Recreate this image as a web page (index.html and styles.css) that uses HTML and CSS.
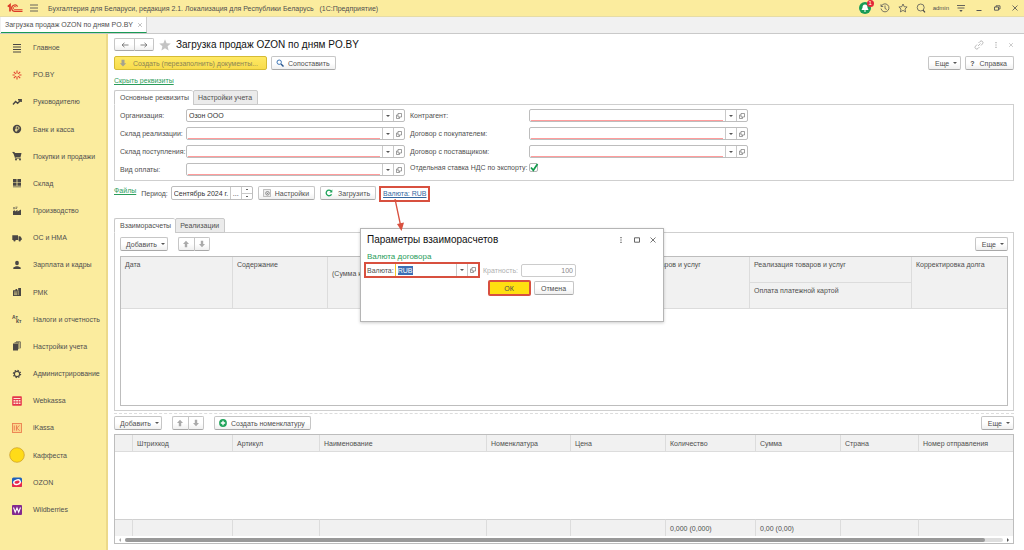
FILE: index.html
```html
<!DOCTYPE html>
<html lang="ru">
<head>
<meta charset="utf-8">
<title>Загрузка продаж OZON по дням PO.BY</title>
<link rel="stylesheet" href="styles.css">
</head>
<body>
<svg class="sprite" aria-hidden="true">
  <symbol id="open" viewBox="0 0 8 8"><path d="M3 1.500h3.500v3.500H3zM3 3H1.500v3.500H4.500V5" fill="none" stroke="#777" stroke-width=".7"/></symbol>
  <symbol id="up" viewBox="0 0 8 8"><path d="M4 .8 7 4H5.200v3.200H2.800V4H1z" fill="#aaa"/></symbol>
  <symbol id="down" viewBox="0 0 8 8"><path d="M4 7.200 1 4h1.800V.8h2.400V4H7z" fill="#aaa"/></symbol>
  <symbol id="close" viewBox="0 0 8 8"><path d="m1.500 1.500 5 5m0-5-5 5" fill="none" stroke="currentColor" stroke-width=".8"/></symbol>
  <symbol id="dots" viewBox="0 0 8 8"><path d="M3.400 1h1.200v1.200H3.400zm0 2.400h1.200v1.200H3.400zm0 2.400h1.200V7H3.400z" fill="currentColor"/></symbol>
</svg>

<header class="topbar">
  <svg class="logo" viewBox="0 0 16 10"><g fill="none" stroke="#dc3a28"><path d="M.8 3.600 3 1.800v6.700" stroke-width="1.700"/><path d="M10.600 3.600A3.200 3.200 0 1 0 8 8.400H15.500" stroke-width="1.200"/><path d="M9.200 4.200a1.600 1.600 0 1 0-1.200 2.500h7.500" stroke-width=".9"/></g></svg>
  <button class="icon-btn" aria-label="Меню"><svg class="ic10" viewBox="0 0 10 10"><path d="M1 2h8M1 5h8M1 8h8" stroke="#555" stroke-width=".9"/></svg></button>
  <span class="app-title">Бухгалтерия для Беларуси, редакция 2.1. Локализация для Республики Беларусь &nbsp; (1С:Предприятие)</span>
  <div class="top-tools">
    <button class="icon-btn bell" aria-label="Уведомления"><svg class="ic12" viewBox="0 0 12 12"><circle cx="6" cy="6" r="6" fill="#189b55"/><path d="M6 2.500c-2 0-2.500 1.500-2.500 3.300L2.500 8h7l-1-2.200C8.500 4 8 2.500 6 2.500zM5 8.500h2v1H5z" fill="#fff"/></svg><span class="badge">1</span></button>
    <button class="icon-btn" aria-label="История"><svg class="ic10" viewBox="0 0 10 10"><path d="M1.300 3.200A4 4 0 1 1 1 5.500M1 1.300v2.200h2.200M5 2.500v3l1.800 1" fill="none" stroke="#555" stroke-width=".8"/></svg></button>
    <button class="icon-btn" aria-label="Избранное"><svg class="ic10" viewBox="0 0 10 10"><path d="m5 1 1.200 2.700 2.900.3L7 6l.6 2.900L5 7.400 2.400 8.900 3 6 .9 4l2.900-.3z" fill="none" stroke="#555" stroke-width=".8"/></svg></button>
    <button class="icon-btn" aria-label="Поиск"><svg class="ic10" viewBox="0 0 10 10"><circle cx="4.700" cy="4.500" r="3.500" fill="none" stroke="#555" stroke-width=".8"/><path d="M7 7.200 9 9.300" stroke="#444" stroke-width="1.200"/></svg></button>
    <span class="user">admin</span>
    <button class="icon-btn" aria-label="Настройка"><svg class="ic10" viewBox="0 0 10 10"><path d="M1 2.500h8M1.500 5h7" stroke="#555" stroke-width=".9"/><path d="M3.300 7h3.400L5 9z" fill="#555"/></svg></button>
    <button class="icon-btn wide" aria-label="Свернуть"><svg class="ic8" viewBox="0 0 8 8"><path d="M1.500 6.500h5" stroke="#555"/></svg></button>
    <button class="icon-btn wide" aria-label="Окно"><svg class="ic8" viewBox="0 0 8 8"><path d="M1.500 3h4v3.200h-4zM3 3V1.800h4V5H5.500" fill="none" stroke="#555" stroke-width=".9"/></svg></button>
    <button class="icon-btn wide" aria-label="Закрыть"><svg class="ic8"><use href="#close"/></svg></button>
  </div>
</header>

<div class="window-tabs">
  <div class="window-tab">Загрузка продаж OZON по дням PO.BY <svg class="ic6"><use href="#close"/></svg></div>
</div>

<div class="workspace">
  <nav class="sidebar">
    <a href="#"><svg viewBox="0 0 16 16"><path d="M4 4.500h8M4 7h8M4 9.500h8M4 12h8" stroke="#4a4744" stroke-width="1.100"/></svg>Главное</a>
    <a href="#"><svg viewBox="0 0 16 16"><path d="M8 3.500v3M8 9.500v3M3.500 8h2.300M10.200 8h2.300M4.800 4.800l2 2M11.200 4.800l-2 2M4.800 11.200l2-2M11.200 11.200l-2-2" stroke="#e2412e" stroke-width="1.100"/></svg>PO.BY</a>
    <a href="#"><svg viewBox="0 0 16 16"><path d="m4 10.500 2.600-3 2 1.800L12 6M9 5.800h3.200V8" fill="none" stroke="#4a4744" stroke-width="1.400"/></svg>Руководителю</a>
    <a href="#"><svg viewBox="0 0 16 16"><circle cx="8" cy="8" r="4.200" fill="#4a4744"/><path d="M7.200 10.800V5.700h1.500a1.300 1.300 0 0 1 0 2.700H6M6 9.600h2.500" fill="none" stroke="#fbec9e" stroke-width=".8"/></svg>Банк и касса</a>
    <a href="#"><svg viewBox="0 0 16 16"><path d="M3.500 4h1.800l.5 1h6.700l-1 4.200H6.200z" fill="#4a4744"/><path d="M3.500 4.400h1.600l1.300 5.800h5.300" fill="none" stroke="#4a4744" stroke-width=".8"/><circle cx="7" cy="11.600" r="1" fill="#4a4744"/><circle cx="11" cy="11.600" r="1" fill="#4a4744"/></svg>Покупки и продажи</a>
    <a href="#"><svg viewBox="0 0 16 16"><path d="M4 4h3.600v3.400H4zm4.400 0H12v3.400H8.400zM4 8.100h3.600v2.700H4zm4.400 0H12v2.700H8.400zM4 11.400h8v.8H4z" fill="#4a4744"/></svg>Склад</a>
    <a href="#"><svg viewBox="0 0 16 16"><path d="M4 12V8l2-.8v1.300l2.500-1.700v1.600L12 6.500V12zM4.500 4h1v2.200h-1zM6.500 3.700h2v.8h-2zm0 1.600h1.300v.8H6.500z" fill="#4a4744"/></svg>Производство</a>
    <a href="#"><svg viewBox="0 0 16 16"><path d="M3.300 5.200H9V10H3.300zM9.500 6.200h1.800l1.400 2V10H9.500z" fill="#4a4744"/><circle cx="5.500" cy="10.500" r="1.100" fill="#4a4744"/><circle cx="10.700" cy="10.500" r="1.100" fill="#4a4744"/></svg>ОС и НМА</a>
    <a href="#"><svg viewBox="0 0 16 16"><ellipse cx="8" cy="6" rx="1.900" ry="2.300" fill="#4a4744"/><path d="M4.300 12v-1.500L7 9.200h2l2.700 1.300V12z" fill="#4a4744"/></svg>Зарплата и кадры</a>
    <a href="#"><svg viewBox="0 0 16 16"><path d="M4 6.200h2.500V5h1.700v1.200h1V4H12v8H4z" fill="#4a4744"/><path d="M5 8h3M5 9.300h3M5 10.600h3M9.200 6.500v4.500" stroke="#fbec9e" stroke-width=".6"/></svg>РМК</a>
    <a href="#"><svg viewBox="0 0 16 16"><g class="mini"><text x="3" y="7.500">Ат</text><text x="7" y="12">Кт</text></g></svg>Налоги и отчетность</a>
    <a href="#"><svg viewBox="0 0 16 16"><path d="M4 5.500h5v7H4z" fill="#4a4744"/><path d="M5.500 4.700h4.300v6.500M7 3.800h4.300v6.500" fill="none" stroke="#4a4744" stroke-width=".8"/></svg>Настройки учета</a>
    <a href="#"><svg viewBox="0 0 16 16"><circle cx="8" cy="8" r="2.600" fill="none" stroke="#4a4744" stroke-width="1.100"/><circle cx="8" cy="8" r="3.600" fill="none" stroke="#4a4744" stroke-width="1.200" stroke-dasharray="1.400 1.428"/></svg>Администрирование</a>
    <a href="#"><svg viewBox="0 0 16 16"><rect x="3.200" y="3.200" width="9.600" height="9.600" rx=".8" fill="#e5334b"/><path d="M4.500 5h7v1h-7zm0 2h2v1.500h-2zm2.600 0h2v1.500h-2zm2.600 0h1.800v1.500H9.700zM4.500 9.500h2V11h-2zm2.600 0h2V11h-2zm2.600 0h1.800V11H9.700z" fill="#fde3d0"/></svg>Webkassa</a>
    <a href="#"><svg viewBox="0 0 16 16"><rect x="3.500" y="3.500" width="9" height="9" fill="#fbd68a" stroke="#ec8050" stroke-width=".9"/><path d="M5.300 5.500v5M7.500 5.300v5.400M10.500 5.500 7.700 8l3 2.700" fill="none" stroke="#e8704a" stroke-width=".8"/></svg>iKassa</a>
    <a href="#"><svg viewBox="0 0 16 16"><circle cx="8" cy="8" r="7.300" fill="#ffdb18" stroke="#c99a28" stroke-width=".7"/></svg>Каффеста</a>
    <a href="#"><svg viewBox="0 0 16 16"><rect x="3" y="3.500" width="10" height="9.500" rx="1.500" fill="#1f60ba"/><path d="M3 9.500 13 8v3.500a1.500 1.500 0 0 1-1.500 1.500h-7A1.500 1.500 0 0 1 3 11.500z" fill="#e9294b"/><ellipse cx="8" cy="8.200" rx="3.300" ry="2.200" fill="#e9294b" stroke="#fff" stroke-width="1.400" transform="rotate(-15 8 8)"/></svg>OZON</a>
    <a href="#"><svg viewBox="0 0 16 16"><rect x="3" y="3" width="10" height="10" rx="1" fill="#83298f"/><path d="m4.500 5.500 1.700 4.800L8 6l1.700 4.300 1.800-4.800" fill="none" stroke="#fff" stroke-width="1.100"/></svg>Wildberries</a>
  </nav>

  <main class="page">
    <div class="page-head">
      <div class="btn-pair nav-pair"><button class="btn" aria-label="Назад"><svg class="ic8" viewBox="0 0 8 8"><path d="M7.500 4H1M3.500 1.800 1 4l2.500 2.200" fill="none" stroke="#777" stroke-width=".9"/></svg></button><button class="btn" aria-label="Вперед"><svg class="ic8" viewBox="0 0 8 8"><path d="M.5 4H7M4.500 1.800 7 4 4.500 6.200" fill="none" stroke="#777" stroke-width=".9"/></svg></button></div>
      <svg class="ic12" viewBox="0 0 12 12"><path d="m6 .3 1.600 3.900 4.200.3-3.200 2.800 1 4.200L6 9.300l-3.600 2.200 1-4.200L.2 4.500l4.200-.3z" fill="#c4c4c4"/></svg>
      <h1>Загрузка продаж OZON по дням PO.BY</h1>
      <div class="head-tools">
        <svg class="ic10" viewBox="0 0 10 10"><path d="m4 6 2.500-2.500M4.500 3 6 1.500a1.600 1.600 0 0 1 2.500 2.300L7 5.500M5.500 7 4 8.500a1.600 1.600 0 0 1-2.500-2.300L3 4.500" fill="none" stroke="currentColor" stroke-width=".8"/></svg>
        <svg class="ic8"><use href="#dots"/></svg>
        <svg class="ic6"><use href="#close"/></svg>
      </div>
    </div>

    <div class="bar commands">
      <button class="btn btn-primary btn-pale"><svg class="ic8" viewBox="0 0 8 8"><path d="M4 7.500 .8 4.200h1.700V.8h3v3.400h1.700z" fill="#a5a38e"/></svg>Создать (перезаполнить) документы...</button>
      <button class="btn"><svg class="ic8" viewBox="0 0 8 8"><circle cx="3.200" cy="3.200" r="2.200" fill="#fff" stroke="#3c74b4"/><path d="m5 5 2.500 2.500" stroke="#27548c" stroke-width="1.400"/></svg>Сопоставить</button>
      <button class="btn more push">Еще</button>
      <button class="btn help"><b>?</b>Справка</button>
    </div>

    <a class="link" href="#">Скрыть реквизиты</a>

    <div class="tabs"><button class="tab active">Основные реквизиты</button><button class="tab">Настройки учета</button></div>
    <section class="panel form">
      <div class="fields">
        <label for="org">Организация:</label>
        <div class="combo"><input id="org" value="Озон ООО"><button class="drop" aria-label="Выбрать"></button><button aria-label="Открыть"><svg><use href="#open"/></svg></button></div>
        <label for="wh1">Склад реализации:</label>
        <div class="combo required"><input id="wh1"><button class="drop" aria-label="Выбрать"></button><button aria-label="Открыть"><svg><use href="#open"/></svg></button></div>
        <label for="wh2">Склад поступления:</label>
        <div class="combo required"><input id="wh2"><button class="drop" aria-label="Выбрать"></button><button aria-label="Открыть"><svg><use href="#open"/></svg></button></div>
        <label for="pay">Вид оплаты:</label>
        <div class="combo required"><input id="pay"><button class="drop" aria-label="Выбрать"></button><button aria-label="Открыть"><svg><use href="#open"/></svg></button></div>
      </div>
      <div class="fields fields-wide">
        <label for="agent">Контрагент:</label>
        <div class="combo required"><input id="agent"><button class="drop" aria-label="Выбрать"></button><button aria-label="Открыть"><svg><use href="#open"/></svg></button></div>
        <label for="buyer">Договор с покупателем:</label>
        <div class="combo required"><input id="buyer"><button class="drop" aria-label="Выбрать"></button><button aria-label="Открыть"><svg><use href="#open"/></svg></button></div>
        <label for="supplier">Договор с поставщиком:</label>
        <div class="combo required"><input id="supplier"><button class="drop" aria-label="Выбрать"></button><button aria-label="Открыть"><svg><use href="#open"/></svg></button></div>
        <label class="check-row" for="vat">Отдельная ставка НДС по экспорту:</label>
        <span class="check check-row"><input type="checkbox" id="vat" checked><svg viewBox="0 0 10 10"><path d="m2 4.500 2.300 2.800L8.500 1" fill="none" stroke="#129a4c" stroke-width="1.700"/></svg></span>
      </div>
    </section>

    <div class="bar period-bar">
      <a class="link files" href="#">Файлы</a>
      <label for="period">Период:</label>
      <div class="combo period"><input id="period" value="Сентябрь 2024 г."><button aria-label="Выбрать период">...</button><span class="spin"><button aria-label="Больше"></button><button aria-label="Меньше"></button></span></div>
      <button class="btn"><svg class="ic8" viewBox="0 0 8 8"><path d="M.5.500h7v7h-7z" fill="#eee" stroke="#999" stroke-width=".6"/><circle cx="4.500" cy="4.300" r="1.800" fill="none" stroke="#777" stroke-width=".8"/><circle cx="4.500" cy="4.300" r=".6" fill="#777"/></svg>Настройки</button>
      <button class="btn load"><svg class="ic8" viewBox="0 0 8 8"><path d="M6.500 5.200A2.800 2.800 0 1 1 6 2" fill="none" stroke="#1fa35a" stroke-width="1.300"/><path d="M7.300.4v3H4.400z" fill="#1fa35a"/></svg>Загрузить</button>
      <a class="link currency marked" href="#">Валюта: RUB</a>
    </div>

    <div class="tabs"><button class="tab active">Взаиморасчеты</button><button class="tab">Реализации</button></div>
    <section class="panel settlements">
      <div class="bar">
        <button class="btn more">Добавить</button>
        <div class="btn-pair"><button class="btn" aria-label="Вверх"><svg class="ic8"><use href="#up"/></svg></button><button class="btn" aria-label="Вниз"><svg class="ic8"><use href="#down"/></svg></button></div>
        <button class="btn more push">Еще</button>
      </div>
      <div class="table-box">
        <table>
          <colgroup><col class="w112"><col class="w95"><col><col class="w104"><col class="w162"><col class="w95"></colgroup>
          <thead>
            <tr class="tall"><th rowspan="2">Дата</th><th rowspan="2">Содержание</th><th rowspan="2" class="second-line">(Сумма к</th><th rowspan="2">товаров и услуг</th><th>Реализация товаров и услуг</th><th rowspan="2">Корректировка долга</th></tr>
            <tr class="tall"><th>Оплата платежной картой</th></tr>
          </thead>
        </table>
      </div>
    </section>

    <div class="divider"></div>
    <div class="bar goods-bar">
      <button class="btn more">Добавить</button>
      <div class="btn-pair"><button class="btn" aria-label="Вверх"><svg class="ic8"><use href="#up"/></svg></button><button class="btn" aria-label="Вниз"><svg class="ic8"><use href="#down"/></svg></button></div>
      <button class="btn"><svg class="ic8" viewBox="0 0 8 8"><circle cx="4" cy="4" r="3.900" fill="#1fa35a"/><path d="M4 1.800v4.400M1.800 4h4.400" stroke="#fff" stroke-width="1.300"/></svg>Создать номенклатуру</button>
      <button class="btn more push">Еще</button>
    </div>
    <div class="table-box goods">
      <table>
        <colgroup><col class="w18"><col class="w100"><col class="w87"><col class="w167"><col class="w84"><col class="w95"><col class="w90"><col class="w85"><col class="w78"><col></colgroup>
        <thead><tr><th></th><th>Штрихкод</th><th>Артикул</th><th>Наименование</th><th>Номенклатура</th><th>Цена</th><th>Количество</th><th>Сумма</th><th>Страна</th><th>Номер отправления</th></tr></thead>
        <tbody><tr><td colspan="10"></td></tr></tbody>
        <tfoot><tr><td></td><td></td><td></td><td></td><td></td><td></td><td>0,000 (0,000)</td><td>0,00 (0,00)</td><td></td><td></td></tr></tfoot>
      </table>
      <div class="scroll"><i class="left"></i><div class="track"><div class="thumb"></div></div><i class="right"></i></div>
    </div>
  </main>
</div>

<svg class="arrow" viewBox="0 0 12 32" aria-hidden="true"><path d="m2 0 5.500 26" stroke="#d8503f" stroke-width="1.300"/><path d="m4 25 7-1.500L8.500 32z" fill="#d8503f"/></svg>

<div class="dialog" role="dialog" aria-labelledby="dlg">
  <div class="dialog-head">
    <h2 id="dlg">Параметры взаиморасчетов</h2>
    <svg class="ic8"><use href="#dots"/></svg>
    <svg class="ic8" viewBox="0 0 8 8"><path d="M1.500 1.800h5v4.400h-5z" fill="none" stroke="#555" stroke-width=".9"/></svg>
    <svg class="ic8"><use href="#close"/></svg>
  </div>
  <h3>Валюта договора</h3>
  <div class="dialog-row">
    <div class="marked cur"><label for="cur">Валюта:</label><div class="combo focus"><div class="value"><input id="cur" value="RUB"></div><button class="drop" aria-label="Выбрать"></button><button aria-label="Открыть"><svg><use href="#open"/></svg></button></div></div>
    <label class="muted" for="mult">Кратность:</label>
    <input class="mult" id="mult" value="100" disabled>
  </div>
  <div class="dialog-actions"><button class="btn btn-primary marked">ОК</button><button class="btn">Отмена</button></div>
</div>
</body>
</html>
```
FILE: styles.css
```css
* { box-sizing: border-box; }
body {
  margin: 0;
  min-height: 100vh;
  display: flex;
  flex-direction: column;
  position: relative;
  background: #fff;
  color: #4f4f4f;
  font: 7px/9px "Liberation Sans", Arial, sans-serif;
}
button, input { font: inherit; color: inherit; margin: 0; padding: 0; border: 0; background: none; }
h1, h2, h3 { margin: 0; font-weight: 400; }
h1, h2 { font-size: 10px; line-height: 12px; color: #111; }
svg { display: block; flex: none; }
.sprite { position: absolute; width: 0; height: 0; }
.ic6 { width: 6px; height: 6px; }
.ic8 { width: 8px; height: 8px; }
.ic10 { width: 10px; height: 10px; }
.ic12 { width: 12px; height: 12px; }

/* Title bar */
.topbar { display: flex; align-items: center; height: 17px; padding: 0 4px 0 7px; background: #fbec9e; border-bottom: 1px solid #e6dca6; }
.logo { width: 16px; height: 10px; margin-right: 6px; }
.icon-btn { display: flex; align-items: center; justify-content: center; }
.app-title { margin-left: 9px; white-space: nowrap; }
.top-tools { display: flex; align-items: center; gap: 8px; margin-left: auto; }
.icon-btn.wide { width: 10px; }
.user { margin: 0 -1px; font-size: 6px; }
.bell { position: relative; margin-right: 1px; }
.badge { position: absolute; top: -2px; right: -3px; width: 7px; height: 7px; border-radius: 50%; background: #e3283a; color: #fff; font-size: 6px; line-height: 7px; text-align: center; }

/* Open windows */
.window-tabs { display: flex; height: 17px; padding-left: 1px; background: #f1f1f1; border-bottom: 1px solid #c9c9c9; }
.window-tab { display: flex; align-items: center; gap: 4px; padding: 0 3px 0 4px; background: #fff; border-right: 1px solid #ccc; border-bottom: 1px solid #189b55; white-space: nowrap; }
.window-tab svg { color: #999; }

.workspace { flex: 1; display: flex; }

/* Sections */
.sidebar { display: flex; flex-direction: column; width: 108px; flex: none; padding: 0 0 27px 9px; background: #fbec9e; border-right: 2px solid #ecd98a; }
.sidebar a { flex: 1; display: flex; align-items: center; gap: 8px; color: inherit; text-decoration: none; white-space: nowrap; }
.sidebar svg { width: 16px; height: 16px; }
.mini { font-size: 5px; font-weight: 700; fill: #4a4744; }

.page { flex: 1; min-width: 0; display: flex; flex-direction: column; padding: 4px 10px 6px 6px; }
.page-head { display: flex; align-items: center; height: 13px; gap: 5px; }
.page-head h1 { white-space: nowrap; }
.head-tools { display: flex; align-items: center; gap: 8px; margin-left: auto; color: #aaa; }

.bar { display: flex; align-items: center; height: 14px; }
.push { margin-left: auto; }
.btn { display: flex; align-items: center; justify-content: center; gap: 4px; height: 14px; padding: 0 5px 0 4px; border: 1px solid #c6c6c6; border-bottom-color: #a8a8a8; border-radius: 2px; background: linear-gradient(#fff 50%, #f0f0f0); white-space: nowrap; }
.btn-primary { background: #ffdf10; border-color: #d5bb35; }
.btn-pale { gap: 6px; padding-right: 8px; background: linear-gradient(#ffe965, #f8dc4c); color: #8c8455; }
.btn-pair { display: flex; }
.btn-pair .btn { width: 16px; padding: 0; }
.btn-pair .btn:first-child { border-radius: 2px 0 0 2px; border-right-width: 0; }
.btn-pair .btn:last-child { border-radius: 0 2px 2px 0; }
.btn.more { padding: 0 3px 0 6px; }
.bar > .more:first-child { padding: 0 2px 0 5px; }
.more::after, .drop::after { content: ""; border: 2px solid transparent; border-top-color: #555; border-bottom: 0; }
.nav-pair .btn { width: 20px; height: 13px; }
.commands { margin-top: 5px; gap: 4px; }
.help { gap: 5px; padding-right: 6px; }
.link { color: #2a9d5b; }
.page > .link { align-self: flex-start; margin: 6px 0 5px; }

/* Tabs and panels */
.tabs { display: flex; position: relative; margin-bottom: -1px; }
.tab { height: 15px; padding: 0 5px 0 4px; border: 1px solid #c9c9c9; background: #ebebeb; border-radius: 2px 2px 0 0; white-space: nowrap; }
.tab.active { padding-left: 5px; padding-right: 4px; background: #fff; border-right: 0; border-bottom-color: #fff; }
.panel { border: 1px solid #cfcfcf; padding: 4px 5px; }
.form { display: flex; gap: 5px; }
.fields { display: grid; grid-template-columns: 61px 219px; grid-auto-rows: 13px; gap: 5px; align-items: center; white-space: nowrap; }
.fields-wide { grid-template-columns: 114px 219px; }
.check-row { align-self: start; }

.combo { display: flex; height: 13px; border: 1px solid #bdbdbd; border-radius: 2px; background: #fff; color: #333; }
.combo input { flex: 1; min-width: 0; padding-left: 2px; outline: 0; }
.combo button { width: 11px; flex: none; border-left: 1px solid #c9c9c9; display: flex; align-items: center; justify-content: center; }
.combo button svg { width: 8px; height: 8px; }
.required input { margin: 0 2px 0 1px; border-bottom: 1px solid #ff9c9c; }
.check { position: relative; width: 10px; height: 10px; }
.check input { appearance: none; display: block; width: 9px; height: 9px; border: 1px solid #b5b5b5; border-radius: 2px; background: #fff; }
.check svg { position: absolute; inset: 0; width: 10px; height: 10px; pointer-events: none; }

.period-bar { margin: 5px 0 18px; }
.files { align-self: flex-start; margin-right: 5px; }
.period { width: 82px; height: 14px; margin: 0 5px 0 3px; }
.spin { display: flex; flex-direction: column; width: 11px; border-left: 1px solid #c9c9c9; }
.combo .spin button { flex: 1; width: auto; border: 0; }
.spin button::before { content: ""; width: 2px; height: 1px; background: #666; }
.combo .spin button + button { border-top: 1px solid #c9c9c9; }
.period-bar .load { margin-left: 5px; gap: 5px; }
.marked { border: 2px solid #d8503f; }
.currency { margin-left: 3px; padding: 1px 2px 2px; color: #3467a0; align-self: flex-start; white-space: nowrap; }

/* Tables */
.settlements { flex: 1; display: flex; flex-direction: column; gap: 5px; }
.settlements .btn-pair, .goods-bar .btn-pair { margin: 0 10px; }
.table-box { flex: 1; border: 1px solid #bdbdbd; }
table { width: 100%; table-layout: fixed; border-collapse: separate; border-spacing: 0; }
th, td { padding: 0 4px; font-weight: 400; text-align: left; white-space: nowrap; }
th, tfoot td { background: #f1f1f1; border-right: 1px solid #dcdcdc; }
th { border-bottom: 1px solid #dcdcdc; }
tr > :last-child { border-right: 0; }
.tall + .tall > :last-child { border-right: 1px solid #dcdcdc; }
.tall th { height: 26px; padding-top: 3px; vertical-align: top; }
.tall .second-line { padding-top: 12px; }
.w112 { width: 112px; } .w95 { width: 95px; } .w104 { width: 104px; } .w162 { width: 162px; }
.w18 { width: 18px; } .w100 { width: 100px; } .w87 { width: 87px; } .w167 { width: 167px; } .w84 { width: 84px; }
.w90 { width: 90px; } .w85 { width: 85px; } .w78 { width: 78px; }
.divider { margin: 2px 0; border-top: 1px dashed #dcdcdc; }
.goods { flex: none; margin-top: 4px; }
.goods thead th { height: 17px; }
.goods tbody td { height: 67px; }
.goods tfoot td { height: 17px; border-top: 1px solid #d0d0d0; }
.scroll { display: flex; align-items: center; gap: 4px; height: 7px; padding: 0 4px; }
.track { flex: 1; height: 4px; border-radius: 2px; background: #dedede; }
.thumb { width: 98%; height: 4px; border-radius: 2px; background: #999; }
.left, .right { border: 2px solid transparent; }
.left { border-right-color: #aaa; border-left: 0; }
.right { border-left-color: #555; border-right: 0; }

/* Dialog over the page */
.arrow { position: absolute; left: 393px; top: 199px; width: 12px; height: 32px; z-index: 2; }
.dialog { position: absolute; left: 360px; top: 228px; width: 304px; min-height: 94px; padding: 5px 6px; background: #fff; border: 1px solid #b5b5b5; box-shadow: 0 1px 3px #0003; }
.dialog-head { display: flex; align-items: center; gap: 8px; color: #555; }
.dialog-head h2 { margin-right: auto; }
.dialog h3 { margin-top: 6px; font-size: 8px; line-height: 10px; color: #2a9d5b; }
.dialog-row { display: flex; align-items: center; margin-left: -3px; }
.cur { display: flex; align-items: center; width: 116px; height: 16px; padding-left: 1px; }
.focus { flex: 1; height: 12px; margin-left: 1px; border: 0; border-left: 1px solid #f1c92e; border-radius: 0; }
.value { flex: 1; display: flex; align-items: center; padding-left: 2px; }
.value input { flex: none; width: 15px; padding: 0; background: #3d6fb5; color: #fff; }
.muted { margin: 0 3px; color: #b0b0b0; }
.mult { width: 55px; height: 13px; padding-right: 2px; border: 1px solid #ccc; border-radius: 2px; text-align: right; color: #888; }
.dialog-actions { display: flex; align-items: center; gap: 3px; margin: 2px 0 0 121px; }
.dialog-actions .btn { width: 40px; }
.dialog-actions .marked { width: 43px; height: 16px; border: 2px solid #d8503f; }
```
